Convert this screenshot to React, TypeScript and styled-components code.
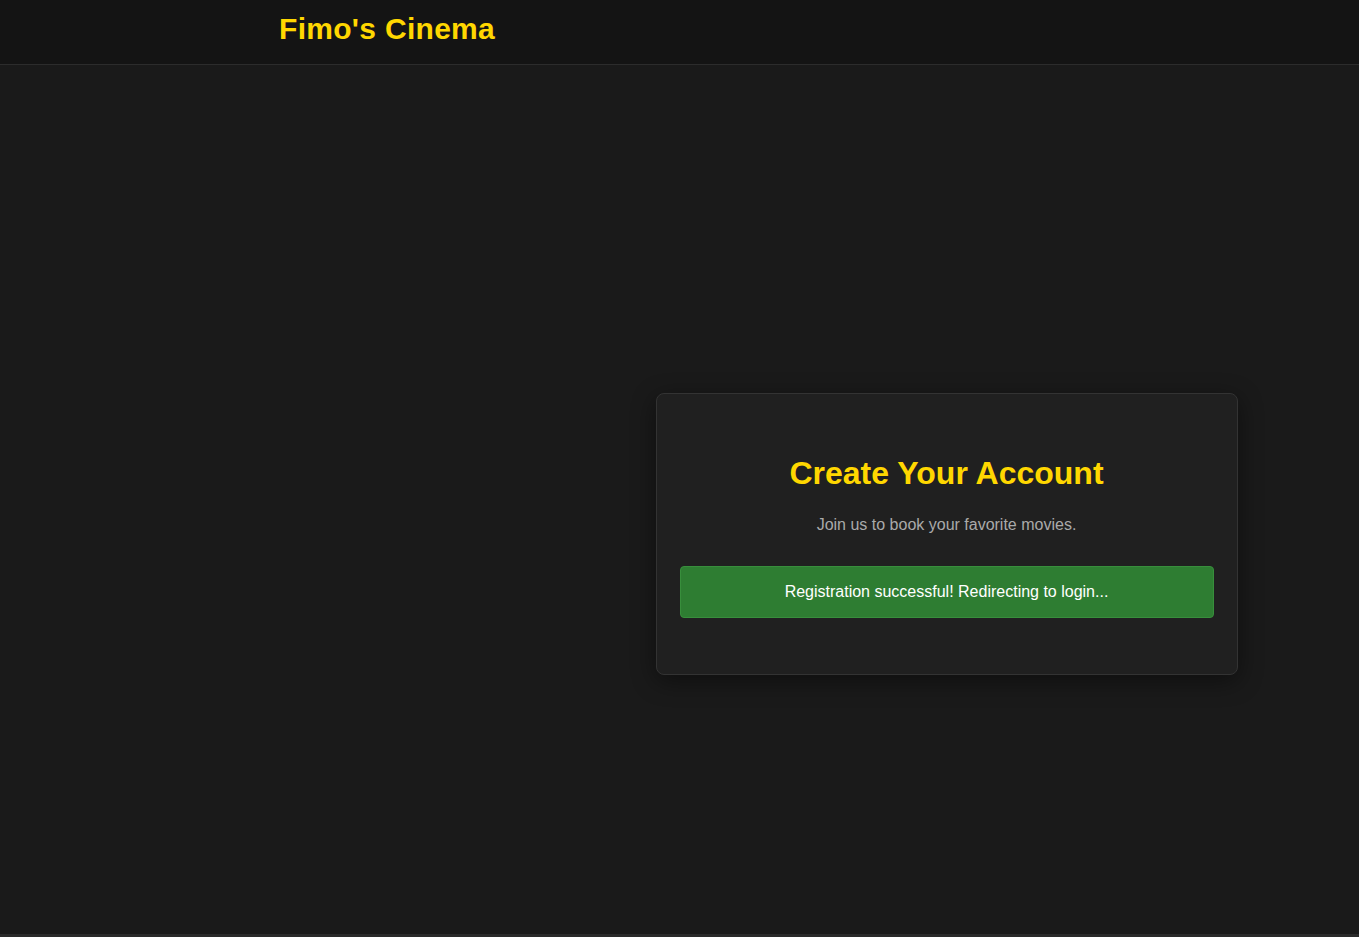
import React from "react";
import styled, { createGlobalStyle } from "styled-components";

const GlobalStyle = createGlobalStyle`
  html, body {
    margin: 0;
    padding: 0;
    background: #1a1a1a;
    font-family: "Liberation Sans", Arial, sans-serif;
  }
  * { box-sizing: border-box; }
`;

const Page = styled.div`
  display: flex;
  flex-direction: column;
  min-height: 100vh;
  background: #1a1a1a;
`;

const Header = styled.header`
  height: 65px;
  background: #141414;
  border-bottom: 1px solid #2c2c2c;
  display: flex;
  align-items: center;
  padding-left: 279px;
`;

const Brand = styled.h1`
  margin: 0;
  font-size: 30px;
  font-weight: 700;
  color: #ffd700;
  letter-spacing: 0.3px;
  padding-bottom: 6px;
`;

const Main = styled.main`
  height: 869px;
  display: flex;
  align-items: center;
  justify-content: center;
  padding: 68px 0 0 534px;
`;

const Card = styled.section`
  width: 582px;
  height: 282px;
  background: #202020;
  border: 1px solid #333;
  border-radius: 8px;
  box-shadow: 0 6px 24px rgba(0, 0, 0, 0.45);
  padding: 52px 23px 0;
  display: flex;
  flex-direction: column;
  align-items: center;
`;

const Title = styled.h2`
  margin: 0;
  font-size: 32px;
  font-weight: 700;
  color: #ffd700;
  line-height: 54px;
`;

const Subtitle = styled.p`
  margin: 16px 0 0;
  font-size: 16px;
  color: #aaaaaa;
  line-height: 18px;
`;

const SuccessBox = styled.div`
  margin-top: 32px;
  width: 100%;
  height: 52px;
  background: #2e7d32;
  border: 1px solid #388e3c;
  border-radius: 4px;
  color: #ffffff;
  font-size: 16px;
  display: flex;
  align-items: center;
  justify-content: center;
`;

const Footer = styled.footer`
  border-top: 3px solid #2a2a2a;
  height: 40px;
  background: #1a1a1a;
`;

export default function App() {
  return (
    <>
      <GlobalStyle />
      <Page>
        <Header>
          <Brand>Fimo's Cinema</Brand>
        </Header>
        <Main>
          <Card>
            <Title>Create Your Account</Title>
            <Subtitle>Join us to book your favorite movies.</Subtitle>
            <SuccessBox>Registration successful! Redirecting to login...</SuccessBox>
          </Card>
        </Main>
        <Footer />
      </Page>
    </>
  );
}
